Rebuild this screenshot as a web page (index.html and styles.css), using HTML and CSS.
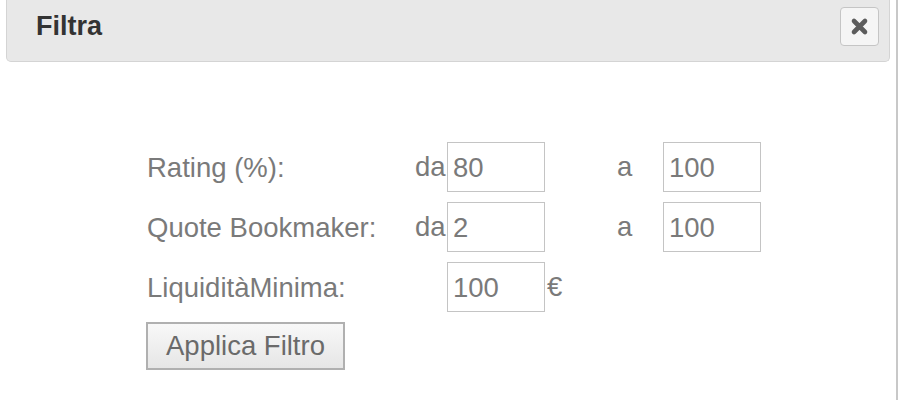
FILE: index.html
```html
<!DOCTYPE html>
<html lang="it">
<head>
  <meta charset="UTF-8">
  <title>Filtra</title>
  <link rel="stylesheet" href="styles.css">
</head>
<body>
  <div class="dialog">
    <div class="titlebar">
      <span class="title">Filtra</span>
      <button class="close" title="Chiudi">
        <svg width="19" height="19" viewBox="0 0 19 19">
          <path d="M4 4 L15 15 M15 4 L4 15" stroke="#5c5c5c" stroke-width="4.6" stroke-linecap="round" fill="none"/>
        </svg>
      </button>
    </div>

    <div class="content">
      <div class="filter-grid">
        <label>Rating (%):</label>
        <span>da</span>
        <input type="text" value="80">
        <span></span>
        <span>a</span>
        <input type="text" value="100">

        <label>Quote Bookmaker:</label>
        <span>da</span>
        <input type="text" value="2">
        <span></span>
        <span>a</span>
        <input type="text" value="100">

        <label>LiquiditàMinima:</label>
        <span></span>
        <input type="text" value="100">
        <span class="currency">€</span>
      </div>

      <button class="apply">Applica Filtro</button>
    </div>
  </div>
</body>
</html>
```

FILE: styles.css
```css
body {
  margin: 0;
  font-family: "Liberation Sans", Arial, sans-serif;
  background: #ffffff;
}

.dialog {
  width: 896px;
  height: 400px;
  border-right: 2px solid #c8c8c8;
  overflow: hidden;
}

.titlebar {
  margin: 0 6px;
  height: 62px;
  padding: 7px 10px 0 29px;
  box-sizing: border-box;
  display: flex;
  justify-content: space-between;
  align-items: flex-start;
  background: #e8e8e8;
  border: 1px solid #d4d4d4;
  border-top: none;
  border-radius: 0 0 5px 5px;
}

.title {
  font-size: 27px;
  font-weight: bold;
  line-height: 39px;
  color: #333;
}

.close {
  width: 39px;
  height: 39px;
  padding: 0;
  display: flex;
  align-items: center;
  justify-content: center;
  background: #f5f5f5;
  border: 1px solid #c5c5c5;
  border-radius: 4px;
}

.content {
  padding: 80px 0 0 147px;
  color: #7a7a7a;
  font-size: 27.5px;
}

.filter-grid {
  display: grid;
  grid-template-columns: 268px 32px 98px 72px 46px 98px;
  grid-auto-rows: 50px;
  row-gap: 10px;
  align-items: center;
}

.filter-grid label {
  padding-top: 2px;
}

.filter-grid input {
  height: 50px;
  width: 98px;
  box-sizing: border-box;
  border: 1px solid #c4c4c4;
  padding: 2px 5px 0;
  font-family: inherit;
  font-size: 27.5px;
  color: #7a7a7a;
  outline: none;
}

.currency {
  padding-left: 2px;
}

.apply {
  margin: 10px 0 0 -1px;
  width: 199px;
  height: 48px;
  font-family: inherit;
  font-size: 27.5px;
  color: #6a6a6a;
  background: linear-gradient(#f8f8f8, #e6e6e6);
  border: 2px solid #b0b0b0;
  padding: 0;
}
```
